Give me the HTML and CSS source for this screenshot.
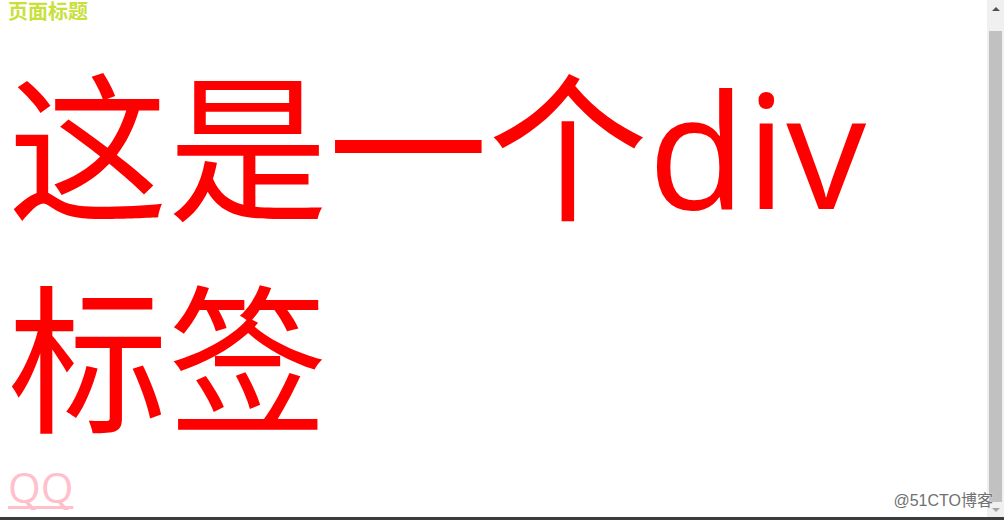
FILE: index.html
```html
<!DOCTYPE html>
<html lang="zh">
<head>
<meta charset="utf-8">
<title>页面标题</title>
<link rel="stylesheet" href="styles.css">
</head>
<body>
<div class="window">
  <div class="viewport">
    <div class="content">
      <div class="title">页面标题</div>
      <div class="big">这是一个div标签</div>
      <div class="qq-line"><a class="qq" href="#">QQ</a></div>
    </div>
    <div class="scrollbar">
      <div class="sb-btn sb-up"><span class="tri-up"></span></div>
      <div class="sb-track"><div class="sb-thumb"></div></div>
      <div class="sb-btn sb-down"><span class="tri-down"></span></div>
    </div>
  </div>
  <div class="frame-bottom"></div>
  <div class="watermark">@51CTO博客</div>
</div>
</body>
</html>
```

FILE: styles.css
```css
html, body {
  margin: 0;
  padding: 0;
  background: #ffffff;
}
.window {
  position: relative;
  width: 1004px;
  height: 520px;
  display: flex;
  flex-direction: column;
  overflow: hidden;
}
.viewport {
  display: flex;
  height: 517px;
}
.content {
  flex: 1;
  padding: 0 8px;
  overflow: hidden;
  font-family: "Open Sans", "Noto Sans CJK SC", sans-serif;
}
.title {
  padding-top: 1px;
  font-size: 20px;
  line-height: 22px;
  font-weight: bold;
  color: #c8e03a;
}
.big {
  margin-top: 18px;
  font-size: 160px;
  line-height: 212px;
  color: #ff0000;
}
.qq-line {
  font-size: 42px;
  line-height: 44px;
}
.qq {
  color: #ffc0cb;
  text-decoration: underline;
  text-decoration-thickness: 3px;
  text-underline-offset: 3px;
  text-decoration-skip-ink: none;
}
.scrollbar {
  width: 17px;
  background: #f0f0f0;
  display: flex;
  flex-direction: column;
}
.sb-btn {
  display: flex;
  align-items: center;
  justify-content: center;
}
.sb-up {
  height: 17px;
}
.sb-down {
  height: 15px;
}
.tri-up {
  width: 0;
  height: 0;
  border-left: 4px solid transparent;
  border-right: 4px solid transparent;
  border-bottom: 4px solid #505050;
}
.tri-down {
  width: 0;
  height: 0;
  border-left: 4px solid transparent;
  border-right: 4px solid transparent;
  border-top: 4px solid #a3a3a3;
}
.sb-track {
  flex: 1;
  display: flex;
  padding: 14px 2px 0 2px;
}
.sb-thumb {
  flex: 1;
  background: #c1c1c1;
}
.frame-bottom {
  height: 3px;
  background: #3c3c3c;
}
.watermark {
  position: absolute;
  right: 11px;
  bottom: 10px;
  font-family: "Liberation Sans", "Noto Sans CJK SC", sans-serif;
  font-size: 16px;
  line-height: 18px;
  color: #707070;
  text-shadow: 0 0 2px #ffffff;
}
```
